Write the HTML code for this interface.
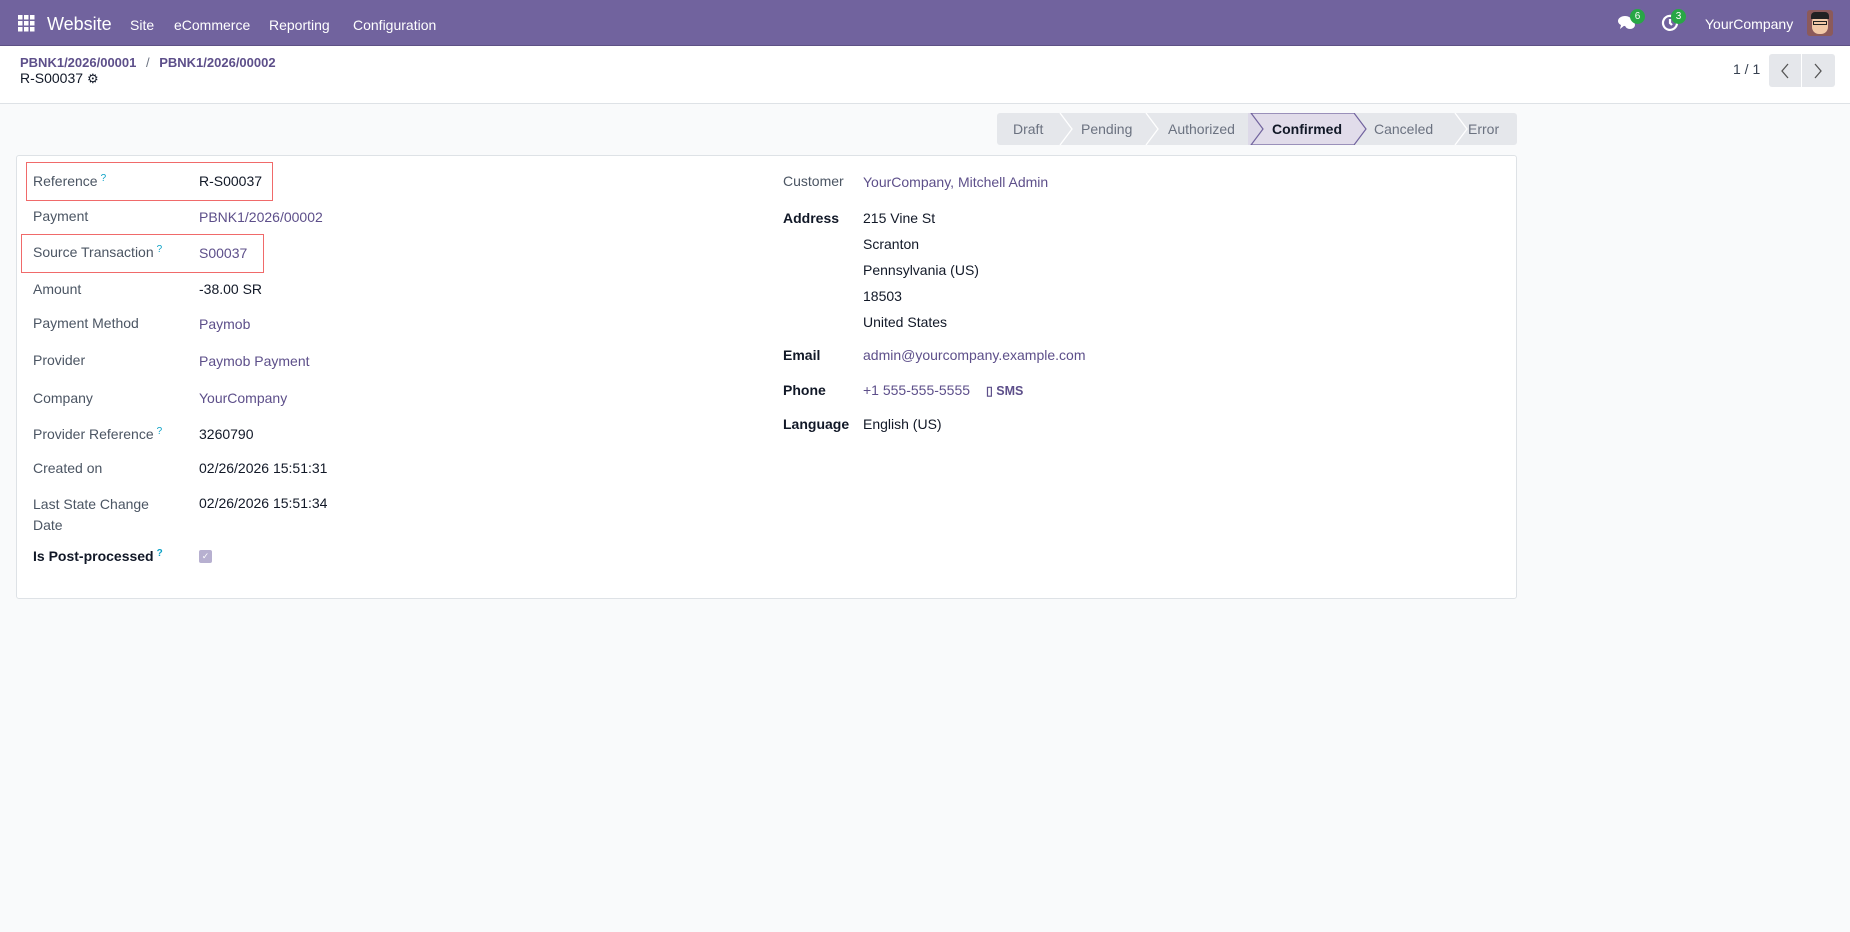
<!DOCTYPE html>
<html><head><meta charset="utf-8"><style>
*{box-sizing:border-box;margin:0;padding:0}
body{width:1850px;height:932px;background:#f9fafb;font-family:"Liberation Sans",sans-serif;font-size:14px;color:#374151;position:relative;overflow:hidden}
.a{position:absolute;white-space:nowrap}
.nav{position:absolute;left:0;top:0;width:1850px;height:46px;background:#71639e;color:#fff;border-bottom:1px solid #5e5185}
.cp{position:absolute;left:0;top:46px;width:1850px;height:58px;background:#fff;border-bottom:1px solid #dee2e6}
.lnk{color:#5d4f8a}
.card{position:absolute;left:16px;top:155px;width:1501px;height:444px;background:#fff;border:1px solid #dee2e6;border-radius:3px}
.lb{color:#4b5563}
.b{font-weight:bold;color:#111827}
.q{color:#0da2c6;font-size:10px;vertical-align:top;margin-left:3px}
.red{position:absolute;border:1.5px solid #f06a6a}
.sb{position:absolute;top:113px;height:32px;left:997px;width:520px;background:#e5e7eb;border-radius:3px;overflow:hidden}
.sb span{position:absolute;top:8px;color:#6b7280;font-size:14px}
</style></head><body>
<div class="nav">
  <svg class="a" style="left:18px;top:15px" width="17" height="17" viewBox="0 0 17 17" fill="#fff"><rect x="0" y="0" width="4.5" height="4.5"/><rect x="6" y="0" width="4.5" height="4.5"/><rect x="12" y="0" width="4.5" height="4.5"/><rect x="0" y="6" width="4.5" height="4.5"/><rect x="6" y="6" width="4.5" height="4.5"/><rect x="12" y="6" width="4.5" height="4.5"/><rect x="0" y="12" width="4.5" height="4.5"/><rect x="6" y="12" width="4.5" height="4.5"/><rect x="12" y="12" width="4.5" height="4.5"/></svg>
  <div class="a" style="left:47px;top:14px;font-size:18px">Website</div>
  <div class="a" style="left:130px;top:17px">Site</div>
  <div class="a" style="left:174px;top:17px">eCommerce</div>
  <div class="a" style="left:269px;top:17px">Reporting</div>
  <div class="a" style="left:353px;top:17px">Configuration</div>
  <svg class="a" style="left:1618px;top:15px" width="18" height="16" viewBox="0 0 18 16" fill="#fff"><ellipse cx="7" cy="6" rx="7" ry="5"/><path d="M3 10 L2 14 L7 10Z"/><ellipse cx="12" cy="10" rx="5" ry="4"/></svg>
  <div class="a" style="left:1630px;top:9px;background:#28a745;border-radius:9px;width:15px;height:15px;font-size:10px;text-align:center;line-height:15px">6</div>
  <svg class="a" style="left:1661px;top:14px" width="18" height="18" viewBox="0 0 18 18" fill="none" stroke="#fff" stroke-width="2.2"><path d="M14 4 A7 7 0 1 0 16 9"/><path d="M9 5 V9 L11 11"/></svg>
  <div class="a" style="left:1671px;top:9px;background:#28a745;border-radius:9px;width:15px;height:15px;font-size:10px;text-align:center;line-height:15px">3</div>
  <div class="a" style="left:1705px;top:16px">YourCompany</div>
  <div class="a" style="left:1807px;top:10px;width:26px;height:26px;background:#8c5a5a;border-radius:3px;overflow:hidden"><div style="position:absolute;left:5px;top:5px;width:16px;height:19px;background:#f2c9a8;border-radius:7px"></div><div style="position:absolute;left:4px;top:2px;width:18px;height:7px;background:#222;border-radius:4px 4px 0 0"></div><div style="position:absolute;left:6px;top:11px;width:14px;height:4px;border:1px solid #222"></div></div>
</div>
<div class="cp">
  <div class="a lnk" style="left:20px;top:9px;font-size:13px;font-weight:bold">PBNK1/2026/00001 <span style="color:#6b7280;font-weight:normal;margin:0 6px">/</span> PBNK1/2026/00002</div>
  <div class="a" style="left:20px;top:24px;font-size:14px;color:#111827">R-S00037 <span style="font-size:13px">⚙</span></div>
  <div class="a" style="left:1733px;top:15px;color:#374151">1 / 1</div>
  <div class="a" style="left:1769px;top:8px;width:32px;height:33px;background:#e5e7eb;border-radius:3px 0 0 3px"></div>
  <div class="a" style="left:1802px;top:8px;width:33px;height:33px;background:#e5e7eb;border-radius:0 3px 3px 0"></div>
  <svg class="a" style="left:1780px;top:17px" width="10" height="16" viewBox="0 0 10 16" fill="none" stroke="#555" stroke-width="1.3"><path d="M8 1 L2 8 L8 15"/></svg>
  <svg class="a" style="left:1813px;top:17px" width="10" height="16" viewBox="0 0 10 16" fill="none" stroke="#555" stroke-width="1.3"><path d="M2 1 L8 8 L2 15"/></svg>
</div>
<div class="sb">
  <svg style="position:absolute;left:0;top:0" width="520" height="32" viewBox="0 0 520 32">
    <path d="M251 0 L254 0 L266 16 L254 32 L251 32Z" fill="#ddd9e8"/>
    <path d="M254 0 L357 0 L369 16 L357 32 L254 32 L266 16Z" fill="#e1dcea" stroke="#71639e" stroke-width="1.2"/>
    <g fill="none" stroke="#fff" stroke-width="1.3"><path d="M63 0 L75 16 L63 32"/><path d="M149 0 L161 16 L149 32"/><path d="M458 0 L470 16 L458 32"/></g>
  </svg>
  <span style="left:16px">Draft</span><span style="left:84px">Pending</span><span style="left:171px">Authorized</span><span style="left:275px;color:#111827;font-weight:bold">Confirmed</span><span style="left:377px">Canceled</span><span style="left:471px">Error</span>
</div>
<div class="card"></div>
<div class="red" style="left:26px;top:162px;width:247px;height:39px"></div>
<div class="red" style="left:21px;top:234px;width:243px;height:39px"></div>
<div class="a lb" style="left:33px;top:173px">Reference<span class="q">?</span></div><div class="a" style="left:199px;top:173px;color:#111827">R-S00037</div>
<div class="a lb" style="left:33px;top:208px">Payment</div><div class="a lnk" style="left:199px;top:209px">PBNK1/2026/00002</div>
<div class="a lb" style="left:33px;top:244px">Source Transaction<span class="q">?</span></div><div class="a lnk" style="left:199px;top:245px">S00037</div>
<div class="a lb" style="left:33px;top:281px">Amount</div><div class="a" style="left:199px;top:281px;color:#111827">-38.00 SR</div>
<div class="a lb" style="left:33px;top:315px">Payment Method</div><div class="a lnk" style="left:199px;top:316px">Paymob</div>
<div class="a lb" style="left:33px;top:352px">Provider</div><div class="a lnk" style="left:199px;top:353px">Paymob Payment</div>
<div class="a lb" style="left:33px;top:390px">Company</div><div class="a lnk" style="left:199px;top:390px">YourCompany</div>
<div class="a lb" style="left:33px;top:426px">Provider Reference<span class="q">?</span></div><div class="a" style="left:199px;top:426px;color:#111827">3260790</div>
<div class="a lb" style="left:33px;top:460px">Created on</div><div class="a" style="left:199px;top:460px;color:#111827">02/26/2026 15:51:31</div>
<div class="a lb" style="left:33px;top:494px;line-height:21px">Last State Change<br>Date</div><div class="a" style="left:199px;top:495px;color:#111827">02/26/2026 15:51:34</div>
<div class="a b" style="left:33px;top:548px">Is Post-processed<span class="q">?</span></div>
<div class="a" style="left:199px;top:550px;width:13px;height:13px;background:#b7b0d0;border-radius:2px;color:#fff;font-size:9px;text-align:center;line-height:13px">✓</div>
<div class="a lb" style="left:783px;top:173px">Customer</div><div class="a lnk" style="left:863px;top:174px">YourCompany, Mitchell Admin</div>
<div class="a b" style="left:783px;top:210px">Address</div>
<div class="a" style="left:863px;top:205px;color:#111827;line-height:26px">215 Vine St<br>Scranton<br>Pennsylvania (US)<br>18503<br>United States</div>
<div class="a b" style="left:783px;top:347px">Email</div><div class="a lnk" style="left:863px;top:347px">admin@yourcompany.example.com</div>
<div class="a b" style="left:783px;top:382px">Phone</div><div class="a lnk" style="left:863px;top:382px">+1 555-555-5555 <span style="margin-left:12px;font-size:12.5px;font-weight:bold">▯ SMS</span></div>
<div class="a b" style="left:783px;top:416px">Language</div><div class="a" style="left:863px;top:416px;color:#111827">English (US)</div>
</body></html>
